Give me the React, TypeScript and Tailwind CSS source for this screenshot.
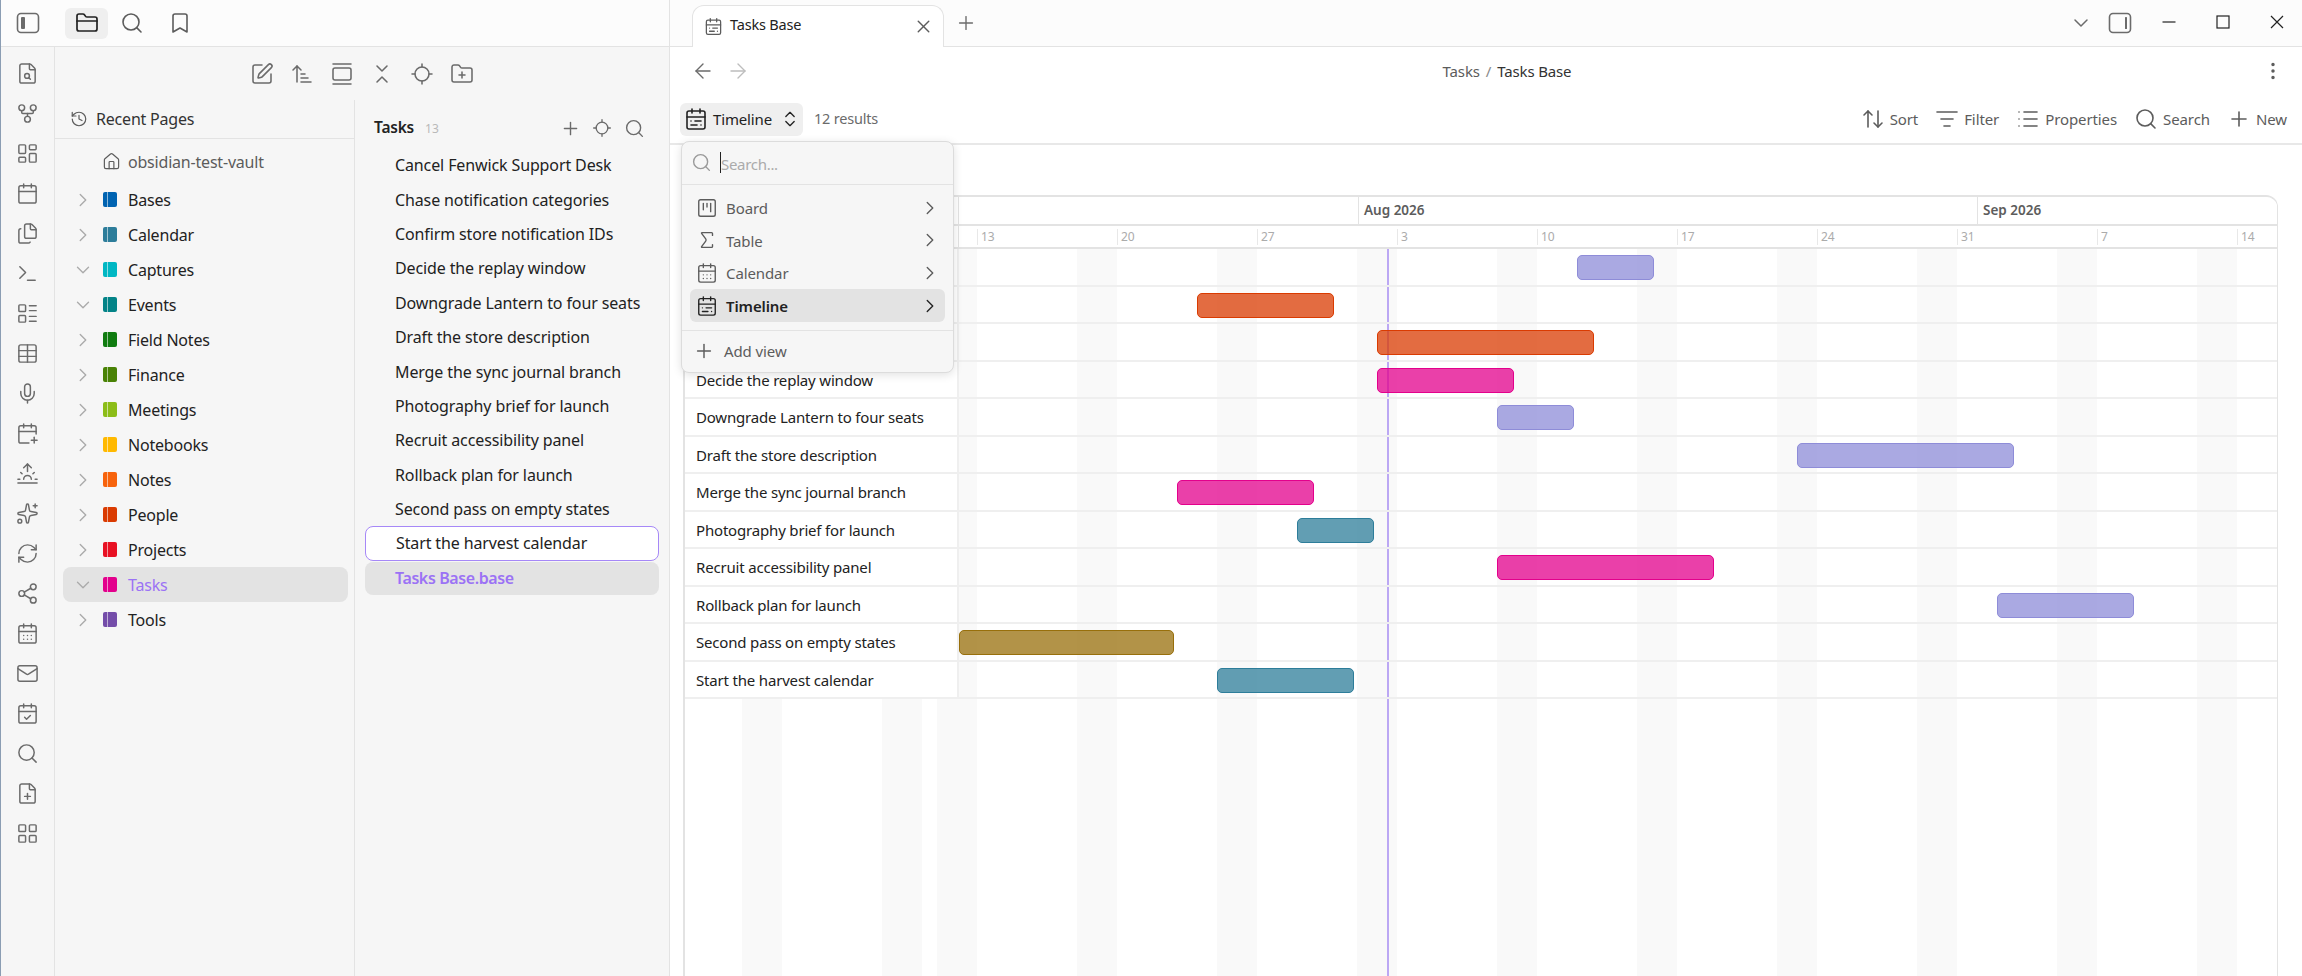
import React from "react";
import {
  ArrowLeft,
  ArrowRight,
  ArrowUpDown,
  ArrowUpNarrowWide,
  Bookmark,
  Calendar,
  CalendarCheck,
  CalendarDays,
  CalendarPlus,
  CalendarRange,
  ChevronDown,
  ChevronRight,
  ChevronsDownUp,
  ChevronsUpDown,
  EllipsisVertical,
  FilePlus,
  FileSearch,
  Files,
  FolderClosed,
  FolderPlus,
  GalleryVertical,
  GitFork,
  History,
  House,
  LayoutDashboard,
  LayoutGrid,
  LayoutList,
  List,
  ListFilter,
  Locate,
  Mail,
  Mic,
  Plus,
  RefreshCw,
  Search,
  Share2,
  Sigma,
  Sparkles,
  SquareKanban,
  SquarePen,
  Sunrise,
  Table,
  Terminal,
  X,
} from "lucide-react";

const railIcons = [
  FileSearch,
  GitFork,
  LayoutDashboard,
  Calendar,
  Files,
  Terminal,
  LayoutList,
  Table,
  Mic,
  CalendarPlus,
  Sunrise,
  Sparkles,
  RefreshCw,
  Share2,
  CalendarDays,
  Mail,
  CalendarCheck,
  Search,
  FilePlus,
  LayoutGrid,
];

const folders = [
  { name: "Bases", color: "#0063b1" },
  { name: "Calendar", color: "#2d7d9a" },
  { name: "Captures", color: "#00b7c3", open: true },
  { name: "Events", color: "#038387", open: true },
  { name: "Field Notes", color: "#107c10" },
  { name: "Finance", color: "#498205" },
  { name: "Meetings", color: "#8cbd18" },
  { name: "Notebooks", color: "#ffb900" },
  { name: "Notes", color: "#f7630c" },
  { name: "People", color: "#da3b01" },
  { name: "Projects", color: "#e81123" },
  { name: "Tasks", color: "#e3008c", open: true, active: true },
  { name: "Tools", color: "#744da9" },
];

const lavender = "border-[#8e8cd8] bg-[#8e8cd8]/75";
const orange = "border-[#da3b01] bg-[#da3b01]/75";
const pink = "border-[#e3008c] bg-[#e3008c]/75";
const teal = "border-[#2d7d9a] bg-[#2d7d9a]/75";
const gold = "border-[#986f0b] bg-[#986f0b]/75";

// x0 / x1 are page pixels, converted to the row's own origin when drawn
// the first three rows sit under the open view menu, so their labels never show
const tasks = [
  { name: "Cancel Fenwick Support Desk", x0: 1577, x1: 1654, color: lavender, covered: true },
  { name: "Chase notification categories", x0: 1197, x1: 1334, color: orange, covered: true },
  { name: "Confirm store notification IDs", x0: 1377, x1: 1594, color: orange, covered: true },
  { name: "Decide the replay window", x0: 1377, x1: 1514, color: pink },
  { name: "Downgrade Lantern to four seats", x0: 1497, x1: 1574, color: lavender },
  { name: "Draft the store description", x0: 1797, x1: 2014, color: lavender },
  { name: "Merge the sync journal branch", x0: 1177, x1: 1314, color: pink },
  { name: "Photography brief for launch", x0: 1297, x1: 1374, color: teal },
  { name: "Recruit accessibility panel", x0: 1497, x1: 1714, color: pink },
  { name: "Rollback plan for launch", x0: 1997, x1: 2134, color: lavender },
  { name: "Second pass on empty states", x0: 959, x1: 1174, color: gold },
  { name: "Start the harvest calendar", x0: 1217, x1: 1354, color: teal },
];

const dayLabels = ["13", "20", "27", "3", "10", "17", "24", "31", "7", "14"];
const stripes = [742, 882, 937, 1077, 1217, 1357, 1497, 1637, 1777, 1917, 2057, 2197];

const GANTT_X = 685;
const LABEL_END = 959;

function SideToggle({ right = false }: { right?: boolean }) {
  return (
    <svg width="24" height="24" viewBox="0 0 24 24" fill="none">
      <rect x="1.5" y="2.5" width="21" height="19" rx="3.5" stroke="#6b6b6b" strokeWidth="1.6" />
      {right ? (
        <rect x="17" y="6" width="2" height="12" rx="0.6" fill="#6b6b6b" />
      ) : (
        <rect x="5" y="6" width="4" height="12" rx="1" fill="#6b6b6b" />
      )}
    </svg>
  );
}

function ToolbarAction({ icon: Icon, label }: { icon: typeof Plus; label: string }) {
  return (
    <div className="flex items-center gap-[5px] text-[#5c5c5c]">
      <Icon size={24} strokeWidth={1.6} />
      <span className="text-[15px] tracking-[-0.1px]">{label}</span>
    </div>
  );
}

function ViewMenu() {
  const views = [
    { label: "Board", icon: SquareKanban },
    { label: "Table", icon: Sigma },
    { label: "Calendar", icon: CalendarDays },
    { label: "Timeline", icon: CalendarRange, active: true },
  ];
  return (
    <div className="absolute left-px top-[38px] z-20 flex h-[232px] w-[273px] flex-col rounded-lg border border-[#dcdcdc] bg-[#f6f6f6] shadow-[0_2px_10px_rgba(0,0,0,0.12)]">
      <div className="flex h-[43px] shrink-0 items-center border-b border-[#e3e3e3] pl-[9px]">
        <Search size={21} strokeWidth={1.6} className="text-[#9a9a9a]" />
        <span className="ml-[8px] h-[21px] w-px bg-[#222]" />
        <span className="pt-[3px] text-[15px] text-[#ababab] tracking-[-0.3px]">Search...</span>
      </div>
      <div className="border-b border-[#e3e3e3] px-[8px] pb-[8px] pt-[7px]">
        {views.map((v) => (
          <div
            key={v.label}
            className={`flex h-[32.6px] items-center rounded-md pl-[6px] pr-[4px] text-[15px] tracking-[-0.1px] ${
              v.active ? "bg-[#e3e3e3] font-semibold text-[#222]" : "text-[#5c5c5c]"
            }`}
          >
            <v.icon size={22} strokeWidth={1.5} className={v.active ? "text-[#222]" : "text-[#5c5c5c]"} />
            <span className="ml-[8px] flex-1 pt-[1px]">{v.label}</span>
            <ChevronRight size={22} strokeWidth={1.5} className={v.active ? "text-[#222]" : "text-[#5c5c5c]"} />
          </div>
        ))}
      </div>
      <div className="flex flex-1 items-center pl-[11px] text-[15px] text-[#5c5c5c] tracking-[-0.1px]">
        <Plus size={22} strokeWidth={1.6} />
        <span className="ml-[9px] pt-[1px]">Add view</span>
      </div>
    </div>
  );
}

function Gantt() {
  return (
    <div className="relative ml-[13px] mr-[24px] h-[782px] overflow-hidden rounded-tr-xl border-l-2 border-r border-t-2 border-[#e3e3e3] bg-white">
      {stripes.map((x) => (
        <div
          key={x}
          className="absolute bottom-0 top-[52px] w-[40px] bg-[#f9f9f9]"
          style={{ left: x - GANTT_X }}
        />
      ))}
      <div className="absolute bottom-0 top-[52px] w-[2px] bg-[#bca8f4]" style={{ left: 1387 - GANTT_X }} />

      {/* month row */}
      <div className="relative flex h-[29px] border-b-2 border-[#e3e3e3] bg-white">
        <div className="h-full w-[274px] border-r border-[#e3e3e3]" />
        {[
          { label: "Aug 2026", x: 1358 },
          { label: "Sep 2026", x: 1977 },
        ].map((m) => (
          <div
            key={m.label}
            className="absolute top-0 flex h-full items-center border-l border-[#e3e3e3] pl-[5px] text-[13.5px] font-semibold text-[#5c5c5c]"
            style={{ left: m.x - GANTT_X }}
          >
            {m.label}
          </div>
        ))}
      </div>

      {/* day row */}
      <div className="relative flex h-[23px] border-b-2 border-[#e3e3e3] bg-white">
        <div className="h-full w-[274px] border-r border-[#e3e3e3]" />
        {dayLabels.map((d, i) => (
          <div
            key={i}
            className="absolute top-[3px] flex h-[16px] items-center border-l border-[#e8e8e8] pl-[3px] text-[12px] text-[#ababab]"
            style={{ left: 977 + i * 140 - GANTT_X }}
          >
            {d}
          </div>
        ))}
      </div>

      {tasks.map((t) => (
        <div key={t.name} className="relative flex h-[37.5px] border-b-2 border-[#efefef]">
          <div className="flex w-[274px] shrink-0 items-center border-r-2 border-[#efefef] bg-white pl-[11px] pt-[1px] text-[15px] tracking-[-0.18px] text-[#222]">
            {t.covered ? null : t.name}
          </div>
          <div className="relative flex-1">
            <div
              className={`absolute top-[6px] h-[25px] rounded-[5px] border ${t.color}`}
              style={{ left: t.x0 - LABEL_END, width: t.x1 - t.x0 }}
            />
          </div>
        </div>
      ))}
    </div>
  );
}

export default function App() {
  return (
    <div className="flex h-screen w-full overflow-hidden border-l border-[#8b9db3] bg-white font-['Noto_Sans','Liberation_Sans',sans-serif] text-[#222]">
      {/* left sidebar */}
      <div className="flex w-[669px] shrink-0 flex-col border-r border-[#e3e3e3] bg-[#f6f6f6]">
        <div className="flex h-[47px] shrink-0 items-center border-b border-[#e3e3e3] bg-[#fcfcfc] text-[#5c5c5c]">
          <div className="flex w-[53px] justify-center">
            <SideToggle />
          </div>
          <div className="ml-[11px] flex h-[31px] w-[43px] items-center justify-center rounded-md bg-[#efefef] text-[#222]">
            <FolderClosed size={24} strokeWidth={1.7} />
          </div>
          <div className="ml-[1px] flex w-[46px] justify-center">
            <Search size={24} strokeWidth={1.6} />
          </div>
          <div className="ml-[1px] flex w-[47px] justify-center">
            <Bookmark size={24} strokeWidth={1.6} />
          </div>
        </div>

        <div className="flex flex-1">
          {/* ribbon */}
          <div className="flex w-[54px] shrink-0 flex-col items-center border-r border-[#e3e3e3] pt-[6px] text-[#6b6b6b]">
            {railIcons.map((Icon, i) => (
              <div key={i} className="flex h-[40px] items-center justify-center">
                <Icon size={23} strokeWidth={1.55} />
              </div>
            ))}
          </div>

          <div className="flex min-w-0 flex-1 flex-col">
            <div className="flex h-[53px] shrink-0 items-center justify-center gap-[16px] text-[#6b6b6b]">
              <SquarePen size={24} strokeWidth={1.55} />
              <ArrowUpNarrowWide size={24} strokeWidth={1.55} />
              <GalleryVertical size={24} strokeWidth={1.55} />
              <ChevronsDownUp size={24} strokeWidth={1.55} />
              <Locate size={24} strokeWidth={1.55} />
              <FolderPlus size={24} strokeWidth={1.55} />
            </div>

            <div className="flex flex-1">
              {/* folder tree */}
              <div className="w-[300px] shrink-0 border-r border-[#e3e3e3]">
                <div className="flex h-[39px] items-center gap-[8px] border-b border-[#e3e3e3] pl-[15px] text-[#5c5c5c]">
                  <History size={18} strokeWidth={1.6} />
                  <span className="text-[16px] tracking-[-0.2px] text-[#333]">Recent Pages</span>
                </div>
                <div className="pt-[5px]">
                  <div className="mb-[3px] flex h-[35px] items-center pl-[47px] text-[#5c5c5c]">
                    <House size={19} strokeWidth={1.5} />
                    <span className="ml-[7px] text-[16px] tracking-[-0.2px]">obsidian-test-vault</span>
                  </div>
                  {folders.map((f) => (
                    <div
                      key={f.name}
                      className={`ml-[8px] mr-[6px] flex h-[35px] items-center rounded-lg pl-[8px] ${f.active ? "bg-[#e3e3e3]" : ""}`}
                    >
                      <div className="flex w-[24px] justify-center text-[#ababab]">
                        {f.open ? (
                          <ChevronDown size={22} strokeWidth={1.5} />
                        ) : (
                          <ChevronRight size={22} strokeWidth={1.5} />
                        )}
                      </div>
                      <div
                        className="relative ml-[8px] h-[15px] w-[14px] rounded-[2px]"
                        style={{ backgroundColor: f.color }}
                      >
                        <div className="absolute bottom-0 left-[4px] top-0 w-px bg-white/55" />
                      </div>
                      <span
                        className={`ml-[11px] pt-[1px] text-[16px] tracking-[-0.2px] ${f.active ? "text-[#9b72f5]" : "text-[#222]"}`}
                      >
                        {f.name}
                      </span>
                    </div>
                  ))}
                </div>
              </div>

              {/* notes in folder */}
              <div className="min-w-0 flex-1">
                <div className="flex h-[48px] items-center pl-[19px] pr-[19px] pt-[8px]">
                  <span className="text-[15.5px] font-semibold tracking-[-0.2px]">Tasks</span>
                  <span className="ml-[11px] mt-[2px] flex-1 text-[12px] text-[#b9b9b9]">13</span>
                  <div className="flex text-[#6b6b6b]">
                    <div className="flex w-[32px] justify-center">
                      <Plus size={21} strokeWidth={1.6} />
                    </div>
                    <div className="flex w-[32px] justify-center">
                      <Locate size={20} strokeWidth={1.6} />
                    </div>
                    <div className="flex w-[32px] justify-center">
                      <Search size={21} strokeWidth={1.6} />
                    </div>
                  </div>
                </div>
                <div className="px-[10px]">
                  {tasks.map((t) => (
                    <div
                      key={t.name}
                      className={`flex h-[34.4px] items-center rounded-lg pl-[30px] text-[16px] tracking-[-0.12px] ${
                        t.name === "Start the harvest calendar" ? "border border-[#a688f7] bg-white" : ""
                      }`}
                    >
                      {t.name}
                    </div>
                  ))}
                  <div className="mt-[1px] flex h-[33px] items-center rounded-lg bg-[#e3e3e3] pl-[30px] text-[16px] font-semibold tracking-[-0.4px] text-[#9b72f5]">
                    Tasks Base.base
                  </div>
                </div>
              </div>
            </div>
          </div>
        </div>
      </div>

      {/* main */}
      <div className="flex min-w-0 flex-1 flex-col">
        <div className="flex h-[47px] shrink-0 items-end border-b border-[#e3e3e3] bg-[#fcfcfc] pl-[22px]">
          <div className="-mb-px flex h-[42px] w-[252px] items-center rounded-t-xl border border-b-0 border-[#e3e3e3] bg-white pb-[1px] pl-[11px] pr-[9px]">
            <CalendarRange size={19} strokeWidth={1.6} className="text-[#5c5c5c]" />
            <span className="ml-[7px] flex-1 pb-[2px] text-[14.5px] tracking-[-0.2px]">Tasks Base</span>
            <X size={21} strokeWidth={1.6} className="text-[#5c5c5c]" />
          </div>
          <div className="mb-[12px] ml-[11px] text-[#6b6b6b]">
            <Plus size={22} strokeWidth={1.5} />
          </div>
          <div className="flex-1" />
          <div className="mb-[11px] flex items-center text-[#6b6b6b]">
            <ChevronDown size={24} strokeWidth={1.5} />
            <div className="ml-[15px] mr-[10px]">
              <SideToggle right />
            </div>
          </div>
          <div className="-mr-[2px] flex h-[46px] items-center text-[#222]">
            {["min", "max", "close"].map((b) => (
              <div key={b} className="flex h-full w-[54px] items-center justify-center pb-[2px]">
                <svg width="14" height="14" viewBox="0 0 14 14" fill="none" stroke="currentColor" strokeWidth="1.2">
                  {b === "min" && <path d="M0.5 7h13" />}
                  {b === "max" && <rect x="1" y="1" width="12" height="12" />}
                  {b === "close" && <path d="M1 1l12 12M13 1L1 13" />}
                </svg>
              </div>
            ))}
          </div>
        </div>

        <div className="flex h-[48px] shrink-0 items-center bg-white pl-[22px] pr-[18px]">
          <div className="flex w-[78px] items-center gap-[11px]">
            <ArrowLeft size={24} strokeWidth={1.4} className="-ml-[1px] text-[#6b6b6b]" />
            <ArrowRight size={24} strokeWidth={1.4} className="text-[#bdbdbd]" />
          </div>
          <div className="flex-1 text-center text-[15px] tracking-[-0.15px]">
            <span className="text-[#5c5c5c]">Tasks</span>
            <span className="mx-[6px] text-[#8a8a8a]">/</span>
            <span className="text-[#333]">Tasks Base</span>
          </div>
          <div className="flex w-[40px] justify-end text-[#5c5c5c]">
            <EllipsisVertical size={22} strokeWidth={1.8} />
          </div>
        </div>

        <div className="flex h-[50px] shrink-0 items-center border-b-2 border-[#e8e8e8] bg-white pl-[10px] pr-[15px]">
          <div className="relative">
            <div className="flex h-[33px] w-[123px] items-center rounded-md bg-[#efefef] pl-[4px]">
              <CalendarRange size={24} strokeWidth={1.6} />
              <span className="ml-[5px] flex-1 text-[15px] tracking-[-0.15px]">Timeline</span>
              <ChevronsUpDown size={20} strokeWidth={1.6} className="mr-[3px]" />
            </div>
            <ViewMenu />
          </div>
          <span className="ml-[11px] flex-1 text-[14.5px] tracking-[-0.2px] text-[#6b6b6b]">12 results</span>
          <div className="flex items-center gap-[17px]">
            <ToolbarAction icon={ArrowUpDown} label="Sort" />
            <ToolbarAction icon={ListFilter} label="Filter" />
            <ToolbarAction icon={List} label="Properties" />
            <ToolbarAction icon={Search} label="Search" />
            <ToolbarAction icon={Plus} label="New" />
          </div>
        </div>

        <div className="min-h-0 flex-1 bg-white pt-[50px]">
          <Gantt />
        </div>
      </div>
    </div>
  );
}
